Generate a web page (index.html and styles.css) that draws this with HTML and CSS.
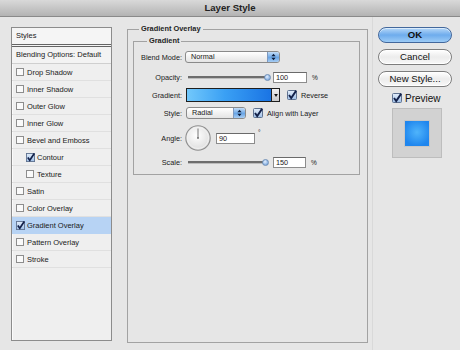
FILE: index.html
```html
<!DOCTYPE html>
<html lang="en">
<head>
  <meta charset="UTF-8">
  <title>Layer Style</title>
  <link rel="stylesheet" href="styles.css">
</head>
<body>
  <svg class="defs" width="0" height="0">
    <defs>
      <linearGradient id="chkfill" x1="0" y1="0" x2="0" y2="1">
        <stop offset="0" stop-color="#e4eefa"/>
        <stop offset="1" stop-color="#9fc0e8"/>
      </linearGradient>
      <radialGradient id="dialfill" cx="0.45" cy="0.4" r="0.7">
        <stop offset="0" stop-color="#ffffff"/>
        <stop offset="1" stop-color="#d8d8d8"/>
      </radialGradient>
    </defs>
  </svg>

  <div class="window">
    <div class="titlebar">Layer Style</div>

    <div class="content">
      <!-- style list -->
      <div class="sidebar">
        <div class="side-head">Styles</div>
        <div class="side-blend">Blending Options: Default</div>
        <div class="side-item"><span class="box"></span>Drop Shadow</div>
        <div class="side-item"><span class="box"></span>Inner Shadow</div>
        <div class="side-item"><span class="box"></span>Outer Glow</div>
        <div class="side-item"><span class="box"></span>Inner Glow</div>
        <div class="side-item"><span class="box"></span>Bevel and Emboss</div>
        <div class="side-item sub">
          <svg class="box-on" viewBox="0 0 10 10"><rect x=".5" y=".5" width="9" height="9" fill="url(#chkfill)" stroke="#5f7290"/><path d="M2 5 L4.2 8 L9.2 0.6" fill="none" stroke="#13214a" stroke-width="1.9"/></svg>Contour
        </div>
        <div class="side-item sub"><span class="box"></span>Texture</div>
        <div class="side-item"><span class="box"></span>Satin</div>
        <div class="side-item"><span class="box"></span>Color Overlay</div>
        <div class="side-item active">
          <svg class="box-on" viewBox="0 0 10 10"><rect x=".5" y=".5" width="9" height="9" fill="url(#chkfill)" stroke="#5f7290"/><path d="M2 5 L4.2 8 L9.2 0.6" fill="none" stroke="#13214a" stroke-width="1.9"/></svg>Gradient Overlay
        </div>
        <div class="side-item"><span class="box"></span>Pattern Overlay</div>
        <div class="side-item"><span class="box"></span>Stroke</div>
      </div>

      <!-- settings -->
      <fieldset class="panel">
        <legend class="panel-title">Gradient Overlay</legend>
        <fieldset class="group">
          <legend class="group-title">Gradient</legend>

          <div class="row row-blend">
            <span class="lbl">Blend Mode:</span>
            <div class="popup popup-wide">
              <span class="popup-text">Normal</span>
              <span class="popup-cap"><svg viewBox="0 0 6 9"><path d="M3 0.5 L5.5 3.5 H0.5 Z M3 8.5 L5.5 5.5 H0.5 Z" fill="#0d1c3a"/></svg></span>
            </div>
          </div>

          <div class="row row-opacity">
            <span class="lbl">Opacity:</span>
            <div class="slider"><span class="track opacity-track"></span><span class="thumb"></span></div>
            <span class="field field-opacity">100</span>
            <span class="unit">%</span>
          </div>

          <div class="row row-gradient">
            <span class="lbl">Gradient:</span>
            <div class="gradient">
              <span class="gradient-fill"></span>
              <span class="gradient-arrow"><svg viewBox="0 0 5 4"><path d="M0 0 H5 L2.5 4 Z" fill="#111"/></svg></span>
            </div>
            <svg class="chk chk-reverse" viewBox="0 0 10 10"><rect x=".5" y=".5" width="9" height="9" rx="1" fill="url(#chkfill)" stroke="#5f7290"/><path d="M2 5 L4.2 8 L9.2 0.6" fill="none" stroke="#13214a" stroke-width="1.9"/></svg>
            <span class="chk-label">Reverse</span>
          </div>

          <div class="row row-style">
            <span class="lbl">Style:</span>
            <div class="popup popup-small">
              <span class="popup-text">Radial</span>
              <span class="popup-cap"><svg viewBox="0 0 6 9"><path d="M3 0.5 L5.5 3.5 H0.5 Z M3 8.5 L5.5 5.5 H0.5 Z" fill="#0d1c3a"/></svg></span>
            </div>
            <svg class="chk chk-align" viewBox="0 0 10 10"><rect x=".5" y=".5" width="9" height="9" rx="1" fill="url(#chkfill)" stroke="#5f7290"/><path d="M2 5 L4.2 8 L9.2 0.6" fill="none" stroke="#13214a" stroke-width="1.9"/></svg>
            <span class="chk-label">Align with Layer</span>
          </div>

          <div class="row row-angle">
            <span class="lbl">Angle:</span>
            <svg class="dial" viewBox="0 0 26 26"><circle cx="13" cy="13" r="12.2" fill="url(#dialfill)" stroke="#8f8f8f" stroke-width="1.1"/><circle cx="13" cy="13" r="10.5" fill="none" stroke="#f4f4f4" stroke-width="0.8"/><path d="M13 13 V3.5" stroke="#6a6a6a" stroke-width="0.9"/><circle cx="13" cy="13" r="0.9" fill="#6a6a6a"/></svg>
            <span class="field field-angle">90</span>
            <span class="unit unit-deg">°</span>
          </div>

          <div class="row row-scale">
            <span class="lbl">Scale:</span>
            <div class="slider"><span class="track scale-track"></span><span class="thumb"></span></div>
            <span class="field field-scale">150</span>
            <span class="unit">%</span>
          </div>
        </fieldset>
      </fieldset>

      <!-- buttons and preview -->
      <div class="actions">
        <div class="btn btn-default">OK</div>
        <div class="btn">Cancel</div>
        <div class="btn">New Style...</div>
        <div class="preview-row">
          <svg class="chk" viewBox="0 0 10 10"><rect x=".5" y=".5" width="9" height="9" rx="1" fill="url(#chkfill)" stroke="#5f7290"/><path d="M2 5 L4.2 8 L9.2 0.6" fill="none" stroke="#13214a" stroke-width="1.9"/></svg>
          <span class="preview-label">Preview</span>
        </div>
        <div class="preview-box"><span class="preview-swatch"></span></div>
      </div>
    </div>
  </div>
</body>
</html>
```

FILE: styles.css
```css
body {
  margin: 0;
  background-color: #e6e6e6;
  font-family: "Liberation Sans", Arial, sans-serif;
  color: #1a1a1a;
}
.defs {
  display: block;
  width: 0;
  height: 0;
  overflow: hidden;
}
.window {
  width: 460px;
  height: 350px;
  display: flex;
  flex-direction: column;
  overflow: hidden;
}
.titlebar {
  height: 16px;
  line-height: 16px;
  border-bottom: 1px solid #8a8a8a;
  background: linear-gradient(#d9d9d9, #b3b3b3);
  text-align: center;
  font-size: 9.6px;
  font-weight: bold;
  color: #222;
}
.content {
  flex: 1;
  display: flex;
  align-items: flex-start;
  padding-left: 11px;
}

/* style list */
.sidebar {
  box-sizing: border-box;
  width: 101px;
  height: 314px;
  margin-top: 10px;
  border: 1px solid #8c8c8c;
  background-color: #efefef;
  box-shadow: inset 1px 1px 0 #fbfbfb;
  font-size: 7.5px;
}
.side-head {
  height: 16px;
  line-height: 16px;
  padding-left: 4px;
  background-color: #f5f5f5;
  border-bottom: 3px double #646464;
}
.side-blend {
  height: 16px;
  line-height: 16px;
  padding-left: 4px;
  background-color: #f3f3f3;
  border-bottom: 1px solid #cfcfcf;
}
.side-item {
  height: 16px;
  display: flex;
  align-items: center;
  padding-left: 4px;
  border-bottom: 1px solid #e0e0e0;
}
.side-item.sub {
  padding-left: 14px;
}
.side-item.active {
  background-color: #b7d3f4;
  border-bottom-color: #b7d3f4;
}
.box {
  box-sizing: border-box;
  width: 8px;
  height: 8px;
  margin-right: 3px;
  border: 1px solid #8d8d8d;
  background-color: #fafafa;
}
.box-on {
  width: 9px;
  height: 9px;
  margin-right: 2px;
}

/* settings panel */
fieldset {
  margin: 0;
  padding: 0;
  min-width: 0;
  border: 1px solid #a2a2a2;
}
legend {
  padding: 0 2px;
  font-size: 7.4px;
  font-weight: bold;
  line-height: 10px;
  color: #1e1e1e;
}
.panel {
  box-sizing: border-box;
  width: 241px;
  height: 319px;
  margin: 7px 0 0 15px;
}
.panel-title {
  margin-left: 11px;
}
.group {
  box-sizing: border-box;
  width: 227px;
  margin: 2px 0 0 5px;
  padding-bottom: 6px;
}
.group-title {
  margin-left: 13px;
}
.row {
  display: flex;
  align-items: center;
  font-size: 7.3px;
}
.lbl {
  width: 48px;
  margin-right: 3px;
  text-align: right;
}
.row-blend { height: 12px; margin-top: 5px; }
.row-opacity { height: 12px; margin-top: 8px; }
.row-gradient { height: 14px; margin-top: 5px; }
.row-style { height: 12px; margin-top: 5px; }
.row-angle { height: 26px; margin-top: 6px; }
.row-scale { height: 11px; margin-top: 6px; }

.popup {
  box-sizing: border-box;
  height: 12px;
  display: flex;
  align-items: stretch;
  border: 1px solid #8a8a8a;
  border-radius: 3px;
  background: linear-gradient(#ffffff, #e4e4e4);
  overflow: hidden;
}
.popup-wide { width: 95px; }
.popup-small { width: 60px; margin-left: 1px; }
.popup-text {
  flex: 1;
  padding-left: 5px;
  line-height: 10px;
}
.popup-cap {
  width: 11px;
  display: flex;
  align-items: center;
  justify-content: center;
  border-left: 1px solid #7e99bf;
  background: linear-gradient(#c4ddf7, #6aa6e6 55%, #a8cdf3);
}
.popup-cap svg {
  width: 5px;
  height: 8px;
}

.slider {
  display: flex;
  align-items: center;
  margin-left: 3px;
}
.track {
  height: 2px;
  background-color: #6d6d6d;
  border-bottom: 1px solid #bcbcbc;
}
.opacity-track { width: 79px; }
.scale-track { width: 77px; }
.thumb {
  box-sizing: border-box;
  width: 7px;
  height: 7px;
  margin-left: -3px;
  border: 1px solid #6f8fb6;
  border-radius: 50%;
  background: radial-gradient(circle at 40% 35%, #e3efff, #5d93d4);
}
.field {
  box-sizing: border-box;
  height: 11px;
  line-height: 9px;
  padding-left: 2px;
  border: 1px solid #8c8c8c;
  border-top-color: #6a6a6a;
  background-color: #fff;
}
.field-opacity { width: 34px; margin-left: 2px; }
.field-angle { width: 39px; margin-left: 5px; }
.field-scale { width: 33px; margin-left: 4px; }
.unit {
  margin-left: 5px;
  font-size: 6.5px;
}
.unit-deg {
  margin-left: 3px;
  align-self: flex-start;
  margin-top: 4px;
}

.gradient {
  box-sizing: border-box;
  width: 94px;
  height: 14px;
  margin-left: 1px;
  display: flex;
  border: 1px solid #1e1e1e;
}
.gradient-fill {
  flex: 1;
  background: linear-gradient(to right, #72c8fb, #3aa0f4 45%, #1a74e4);
}
.gradient-arrow {
  width: 7px;
  display: flex;
  align-items: center;
  justify-content: center;
  border-left: 1px solid #1e1e1e;
  background: linear-gradient(#f0f0f0, #c9c9c9);
}
.gradient-arrow svg {
  width: 4px;
  height: 3px;
}
.chk {
  width: 10px;
  height: 10px;
}
.chk-reverse { margin-left: 7px; }
.chk-align { margin-left: 7px; }
.chk-label {
  margin-left: 4px;
}
.dial {
  width: 26px;
  height: 26px;
}

/* buttons */
.actions {
  align-self: stretch;
  width: 74px;
  margin-left: 4px;
  padding: 10px 0 0 5px;
  border-left: 1px solid #d9d9d9;
  display: flex;
  flex-direction: column;
}
.btn {
  box-sizing: border-box;
  height: 16px;
  margin-bottom: 6px;
  line-height: 14px;
  text-align: center;
  font-size: 9.6px;
  color: #111;
  border: 1px solid #7d7d7d;
  border-radius: 8px;
  background: linear-gradient(#ffffff, #ececec 50%, #f8f8f8);
  box-shadow: inset 0 0 0 1px #ffffff;
}
.btn-default {
  font-weight: bold;
  border-color: #43689c;
  background: linear-gradient(#b7d8f8, #6eaced 50%, #9ccbf6);
  box-shadow: inset 0 1px 0 #d9ebfc;
}
.preview-row {
  height: 10px;
  display: flex;
  align-items: center;
  margin-left: 14px;
}
.preview-label {
  margin-left: 3px;
  font-size: 10px;
  color: #111;
}
.preview-box {
  box-sizing: border-box;
  width: 50px;
  height: 50px;
  margin: 5px 0 0 14px;
  display: flex;
  align-items: center;
  justify-content: center;
  border: 1px solid #bdbdbd;
  background-color: #d2d2d2;
}
.preview-swatch {
  width: 24px;
  height: 25px;
  background: radial-gradient(circle at 50% 45%, #4fb4fb, #1f86ee 75%);
  box-shadow: 0 0 0 1px #c7c7c7;
}
```
